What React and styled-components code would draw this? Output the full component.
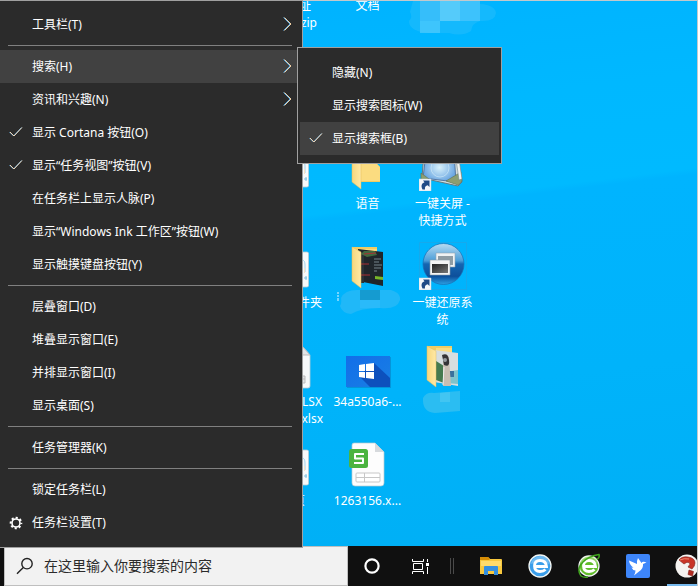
import React from "react";
import styled, { createGlobalStyle, css } from "styled-components";

const GlobalStyle = createGlobalStyle`
  * { box-sizing: border-box; }
  body { margin: 0; overflow: hidden; }
  button { border: 0; padding: 0; background: none; color: inherit; font: inherit; }
  svg { display: block; flex: none; }
`;

const uiFont = css`
  font-family: "Noto Sans", "Noto Sans CJK SC", sans-serif;
`;

const Screen = styled.div`
  ${uiFont}
  position: relative;
  display: flex;
  flex-direction: column;
  height: 100vh;
  border-right: 1px solid #c3c9cc;
  color: #fff;
  font-size: 12px;
`;

/* ---------- desktop ---------- */

const Desktop = styled.main`
  flex: 1;
  min-height: 0;
  overflow: hidden;
  border-top: 1px solid #c3c9cc;
  background: linear-gradient(173deg, #00b1ff 0%, #00b8ff 25%, #00baff 40%, #00b4fe 41%, #00b3fa 70%, #00aff5 100%);
`;

const IconGrid = styled.div`
  display: grid;
  grid-template-columns: repeat(3, 75px);
  grid-template-rows: repeat(6, 99px);
  grid-auto-flow: column;
  margin: -56px 0 0 255px;
`;

const Shortcut = styled.button`
  display: flex;
  flex-direction: column;
  align-items: center;
  gap: 4px;
`;

const Picture = styled.span`
  display: block;
  width: 48px;
  height: 48px;
`;

const Caption = styled.span`
  width: 75px;
  line-height: 17px;
  text-align: center;
  white-space: nowrap;
`;

const CaptionLine = styled.span`
  display: block;
  text-align: ${(p) => (p.$end === undefined ? "center" : "right")};
  padding-right: ${(p) => p.$end || 0}px;
`;

/* ---------- menus ---------- */

const menuPanel = css`
  background: #2b2b2b;
  border: 1px solid #a0a0a0;
`;

const ContextMenu = styled.div`
  ${menuPanel}
  position: absolute;
  top: 0;
  left: 0;
  width: 303px;
  padding: 7px 0 8px;
  border-left: 0;
  z-index: 2;
`;

const SubMenu = styled.div`
  ${menuPanel}
  position: absolute;
  left: 297px;
  top: -3px;
  width: 205px;
  padding: 8px 2px;
`;

const ItemSlot = styled.div`
  position: relative;
`;

const MenuItem = styled.button`
  display: flex;
  align-items: center;
  width: 100%;
  height: 33px;
  padding-right: 10px;
  text-align: left;
  background: ${(p) => (p.$active ? "#414141" : "transparent")};
`;

const Mark = styled.span`
  display: flex;
  justify-content: center;
  width: 32px;
`;

const ItemText = styled.span`
  flex: 1;
  line-height: 18px;
  white-space: nowrap;
`;

const Separator = styled.hr`
  height: 1px;
  margin: 4px 10px 4px 8px;
  border: 0;
  background: #808080;
`;

/* ---------- taskbar ---------- */

const Taskbar = styled.footer`
  display: flex;
  flex: none;
  height: 40px;
  padding-left: 4px;
  overflow: hidden;
  background: #101010;
`;

const SearchBox = styled.label`
  display: flex;
  align-items: center;
  gap: 10px;
  width: 344px;
  flex: none;
  padding-left: 11px;
  border: 1px solid #bfbfbf;
  background: #f2f2f2;
`;

const SearchInput = styled.input`
  ${uiFont}
  flex: 1;
  min-width: 0;
  border: 0;
  padding: 0;
  outline: 0;
  background: none;
  color: #1f1f1f;
  font-size: 14px;
  line-height: 20px;
  &::placeholder { color: #2b2b2b; opacity: 1; }
`;

const TaskButton = styled.button`
  display: flex;
  align-items: center;
  justify-content: center;
  flex: none;
  width: ${(p) => (p.$system ? 48 : 49)}px;
  height: 40px;
`;

const RunningButton = styled(TaskButton)`
  background: linear-gradient(#76b9ed, #76b9ed) 5px 100% / 44px 2px no-repeat;
`;

const Grip = styled.span`
  flex: none;
  align-self: center;
  width: 4px;
  height: 16px;
  margin: 0 12px 0 6px;
  border: 1px solid #4a4a4a;
  border-width: 0 1px;
`;

/* ---------- glyphs ---------- */

const Chevron = () => (
  <svg width="9" height="16" viewBox="0 0 9 16" fill="none">
    <path d="M.5.5 7 7 .5 13.5" stroke="#5aa9e0" />
    <path d="M1.5.5 8 7 1.5 13.5" stroke="#f0cfa4" />
  </svg>
);

const Check = () => (
  <svg width="14" height="14" viewBox="0 0 14 14" fill="none">
    <path d="M.5 6 4.5 10 12.5 1.5" stroke="#69a9d8" />
    <path d="M1 6 5 10 13 1.5" stroke="#ecd5b8" />
  </svg>
);

const Gear = () => (
  <svg width="14" height="14" viewBox="0 0 14 14" fill="none" stroke="#fff">
    <circle cx="7" cy="7" r="4" strokeWidth="1.6" />
    <circle cx="7" cy="7" r="5.3" strokeWidth="2" strokeDasharray="2.1 2.063" strokeDashoffset="1" />
  </svg>
);

const Magnifier = () => (
  <svg width="18" height="18" viewBox="0 0 18 18" fill="none" stroke="#222" strokeWidth="1.4">
    <circle cx="11" cy="6.7" r="5.2" />
    <path d="M7.3 10.4 1 16.8" />
  </svg>
);

/* ---------- desktop pictures ---------- */

const SheetEdge = ({ top, tall }) => (
  <svg width="48" height="48" viewBox="0 0 48 48">
    <path
      d={tall ? "M9 5h24l8 9v31q0 2-2 2H9z" : `M9 ${top}h29.500l1 1v33l-1 1H9z`}
      fill="#f7f9fa"
      stroke="#b8cbd4"
      strokeWidth=".8"
    />
    {tall ? (
      <path d="M33 5v9h8zM30 35h6v7h-6m0-4h6" fill="#e1e4e6" stroke="#bbb" />
    ) : (
      <>
        <path d="M33 18q3 0 3 5v7" fill="none" stroke="#9fd1ea" />
        <path d="M35.500 26v5" stroke="#f3e2c8" />
        <path d="M35 36h3m-1-2v4" stroke="#7fbfdf" />
      </>
    )}
  </svg>
);

const ShortcutArrow = () => (
  <g>
    <path d="M0 36h12v12H0z" fill="#f5f7fa" stroke="#c9d2da" strokeWidth=".5" />
    <path d="M3.500 46.500C1.500 42.500 3 40 5.500 39.200L4 37.500h6.500V44L8.700 42.300C6.800 42.500 5.500 44 6 46.500z" fill="#1f4a86" />
  </g>
);

const Folder = ({ children }) => (
  <svg width="48" height="48" viewBox="0 0 48 48">
    <defs>
      <linearGradient id="flap">
        <stop offset="0" stopColor="#f7d77c" />
        <stop offset="1" stopColor="#ffe9a6" />
      </linearGradient>
    </defs>
    <path d="M8 5h25v16l3 3v15H16z" fill="#f1cc63" />
    <path d="M17 7h16v14l3 3v14H17z" fill="#fbdc80" />
    {children}
    <path d="M8 5l9 5v36l-9-7z" fill="url(#flap)" stroke="#e2bd5e" strokeWidth=".5" />
  </svg>
);

const CodePage = () => (
  <g>
    <path d="M14 7l25 3v34l-25-5z" fill="#20262b" />
    <path d="M14 11h6v30h-3z" fill="#2b3237" />
    <path d="M20 9h11l2 4-10 2-6-3z" fill="#497b45" opacity=".8" />
    <path d="M20 12l12-1M17 22h8M17 33h9" stroke="#a92e35" />
    <path d="M30 17h7M30 20h5M30 23h8M30 26h7M30 29h3" stroke="#8b9da5" strokeWidth=".8" />
    <path d="M31 34l8 1v3l-8-1z" fill="#79b729" />
  </g>
);

const PhotoPage = () => (
  <g>
    <path d="M15 9l24 3v33l-24-4z" fill="#d8dedf" />
    <path d="M17 20l8 5v17l-8-3z" fill="#457a50" />
    <path d="M27 31l12-2v14l-12-1z" fill="#7fc3cc" />
    <path d="M30 30h5v6h-5z" fill="#3a719c" />
    <path d="M24 15q5-3 6 2l2 28h-8z" fill="#c9beb3" />
    <path d="M23 14q6-3 7 5t-5 5z" fill="#353437" />
    <circle cx="26" cy="19" r="2" fill="#969ba0" />
    <path d="M25 26l-1 18" stroke="#eee" />
  </g>
);

const Monitor = () => (
  <svg width="48" height="48" viewBox="0 0 48 48">
    <defs>
      <radialGradient id="glass">
        <stop offset="0" stopColor="#d8f1fb" />
        <stop offset="1" stopColor="#6ba7e2" />
      </radialGradient>
    </defs>
    <path d="M5 8h33l5 31-4 4L3 35z" fill="#d1dcdc" stroke="#617b83" />
    <path d="M7 10h28l2 29L4 35z" fill="url(#glass)" stroke="#5678a4" />
    <circle cx="21" cy="25" r="9" fill="none" stroke="#d5ecf8" opacity=".6" />
    <path d="M2 30l8 6-8 3z M27 38l15-9 1 9-4 4z" fill="#8c9e72" stroke="#5f7051" strokeWidth=".6" />
    <path d="M36 9h3l4 27-3 1z" fill="#f3f5f3" stroke="#72868c" strokeWidth=".6" />
    <ShortcutArrow />
  </svg>
);

const RestoreBall = () => (
  <svg width="48" height="48" viewBox="0 0 48 48">
    <defs>
      <linearGradient id="ball" x2="0" y2="1">
        <stop offset="0" stopColor="#b9dcf2" />
        <stop offset=".42" stopColor="#4a9dd8" />
        <stop offset=".5" stopColor="#1566b1" />
        <stop offset=".8" stopColor="#0d4f9b" />
        <stop offset="1" stopColor="#2ba0e4" />
      </linearGradient>
      <linearGradient id="pane" x2="1" y2="1">
        <stop offset="0" stopColor="#222" />
        <stop offset="1" stopColor="#777" />
      </linearGradient>
    </defs>
    <path d="M.5.500h47v47H.500z" fill="none" stroke="#16a9ec" />
    <circle cx="24.500" cy="22" r="20.500" fill="url(#ball)" stroke="#1a6fb3" strokeWidth=".7" />
    <path d="M17 11h19v14H17z" fill="#eff2f4" stroke="#94a5b1" strokeWidth=".6" />
    <path d="M19 14h15v9H19z" fill="#8f9ca4" />
    <path d="M11 18h20v15H11z" fill="#f5f5f5" stroke="#8b9ba6" strokeWidth=".6" />
    <path d="M13 22h16v9H13z" fill="url(#pane)" />
    <ShortcutArrow />
  </svg>
);

const WindowsPicture = () => (
  <svg width="48" height="48" viewBox="0 0 48 48">
    <defs>
      <linearGradient id="blue" x2="1" y2="1">
        <stop offset="0" stopColor="#126ee9" />
        <stop offset="1" stopColor="#197fe4" />
      </linearGradient>
    </defs>
    <path d="M3 16h44v31H3z" fill="#087bc0" opacity=".55" />
    <path d="M2 15h44v31H2z" fill="url(#blue)" />
    <path d="M30 22l16 15v9H26L15 35z" fill="#0d50bd" />
    <path d="M15 24l6-1v7h-6zM22 23l8-1v8h-8zM15 31h6v6l-6-1zM22 31h8v7l-8-1z" fill="#fff" />
  </svg>
);

const SpreadsheetFile = () => (
  <svg width="48" height="48" viewBox="0 0 48 48">
    <path d="M10 3h21l9 9v31q0 3-3 3H11q-3 0-3-3V5q0-2 2-2z" fill="#fdfdfd" stroke="#b6c8d0" strokeWidth=".7" />
    <path d="M31 3v9h9z" fill="#d7dadd" />
    <rect x="12" y="33" width="24" height="9" rx="1" fill="#fff" stroke="#c7c7c7" />
    <path d="M12 37.500h24M20.500 33v9" stroke="#c7c7c7" />
    <rect x="5" y="9" width="19" height="19" rx="2.500" fill="#4bb440" />
    <path d="M20 14h-9v4.500h8V23h-9" fill="none" stroke="#fff" strokeWidth="2" strokeLinejoin="round" />
  </svg>
);

const CloudSmear = () => (
  <svg width="112" height="36" viewBox="-22 0 112 36">
    <path d="M4 0h67v3q15 1 16 9-1 9-16 8-8 2-9 10-9 6-22 2H21Q0 31 0 20q4-4 1-9z" fill="#22bcfc" opacity=".6" />
    <path d="M11 0h20v20H11z" fill="#36befa" />
    <path d="M31 0h20v20H31z" fill="#55cbfa" />
    <path d="M51 0h20v20H51z" fill="#3dc2fc" />
    <path d="M11 20h20v12H11z" fill="#50cafb" opacity=".7" />
  </svg>
);

const TealSmear = () => (
  <svg width="64" height="26" viewBox="0 0 64 26">
    <path d="M2 3v2M1 7h2M2 9v3" stroke="#e8f6ff" />
    <path d="M5 9Q9 0 24 1h31q10 3 9 10-3 10-20 8-20 0-29 6Q6 24 4 17q2-3 1-8z" fill="#20b8f8" />
    <path d="M24 1h20v10H24z" fill="#159bd0" />
    <path d="M24 11h20v8H24z" fill="#2abafa" />
  </svg>
);

const SmallSmear = () => (
  <svg width="42" height="24" viewBox="0 0 42 24">
    <path d="M1 8Q4 2 12 3l26-2v20l-25 2Q0 22 1 8z" fill="#2bbdf2" />
    <path d="M18 3l10-1v10H18z" fill="#42c5f2" />
  </svg>
);

const SmearHolder = styled.span`
  display: flex;
  justify-content: center;
  margin-top: ${(p) => p.$lift}px;
`;

/* ---------- taskbar pictures ---------- */

const CortanaRing = () => (
  <svg width="18" height="18" viewBox="0 0 18 18" fill="none">
    <circle cx="9" cy="9" r="6.600" stroke="#fff" strokeWidth="2.200" />
  </svg>
);

const TaskViewGlyph = () => (
  <svg width="17" height="17" viewBox="0 0 17 17" fill="none" stroke="#fff">
    <path d="M.5 1v2.500h11V1M1.500 5.500h9v6h-9zM.5 16v-2.500h11V16M15.500 1v3M15.500 9v7" />
    <path d="M14 5h3v3h-3z" fill="#fff" stroke="none" />
  </svg>
);

const ExplorerIcon = () => (
  <svg width="22" height="20" viewBox="0 0 22 20">
    <path d="M0 2q0-1 1-1h7l2 2h11q1 0 1 1v14H0z" fill="#f8c83e" />
    <path d="M0 4V2q0-1 1-1h7l2 2-1 1z" fill="#d68d05" />
    <path d="M1 5h20v5H1z" fill="#ffdb6a" />
    <path d="M4 19v-8q0-1 1-1h12q1 0 1 1v8h-4v-4H8v4z" fill="#348fdf" />
  </svg>
);

const BrowserBall = ({ color, light, leaf }) => (
  <svg width="24" height="26" viewBox="0 0 24 26">
    <circle cx="12" cy="13" r={leaf ? 10 : 11} fill={color} stroke="#f2f6f4" strokeWidth="1.300" />
    <path d="M3 11Q4 4 12 3t9 8Q12 6 3 11z" fill={light} opacity=".5" />
    <path
      d="M6.500 13.500h12Q18 7.500 12 7.500q-5.500 0-5.500 5.500t5.500 5.500q3.500 0 5.500-2"
      fill="none"
      stroke="#fff"
      strokeWidth="2.800"
    />
    {leaf && (
      <path
        d="M4 23Q-1 16 6 9 12 3 22 1.500q1 3-2 5M4 23q3 2 7 1"
        fill="none"
        stroke="#3fa51c"
        strokeWidth="1.500"
      />
    )}
  </svg>
);

const BirdIcon = () => (
  <svg width="24" height="24" viewBox="0 0 24 24">
    <rect width="24" height="24" rx="2" fill="#3e86fa" />
    <path
      d="M3 6.500l8 3.500Q10.500 7 12 4l3.500 5q1-1.800 2.500-1.200l2.500.7-3.500 1.500q.5 5-4 7.500l-5 4q1.500-3 1.500-5-3-.3-4-3l2 .2Q3.500 11 3 6.500z"
      fill="#fff"
    />
  </svg>
);

const HelpIcon = () => (
  <svg width="24" height="24" viewBox="0 0 24 24">
    <circle cx="12" cy="12" r="11.500" fill="#f5f3f1" />
    <path d="M4 6q3-4 9-3 7 1 7 6 0 3-3 6l-4-2q3-3 1-4.500-2-1-5 1.500z" fill="#c93528" stroke="#7d2019" strokeWidth=".6" />
    <path d="M5 6q4-2 9-1" fill="none" stroke="#f08b72" />
    <path d="M14 16l4.500 1.500-1 4.500-4.500-1.500z" fill="#b32c22" stroke="#7d2019" strokeWidth=".6" />
  </svg>
);

/* ---------- data ---------- */

const shortcuts = [
  { name: "zip", lines: [["址", 19], ["zip", 13]] },
  { name: "blank-1" },
  { name: "page", art: <SheetEdge top={9} /> },
  { name: "folder", art: <SheetEdge top={10} />, lines: [["件夹", 8]] },
  { name: "xlsx", art: <SheetEdge tall />, lines: [["LSX", 8], ["xlsx", 7]] },
  { name: "tail", art: <SheetEdge top={10} />, lines: [["页", 25]] },
  { name: "documents", art: <Folder />, lines: [["文档"]] },
  { name: "blank-2" },
  { name: "voice", art: <Folder />, lines: [["语音"]] },
  { name: "code", art: <Folder><CodePage /></Folder>, smear: <TealSmear />, lift: -5 },
  { name: "picture", art: <WindowsPicture />, lines: [["34a550a6-..."]] },
  { name: "sheet", art: <SpreadsheetFile />, lines: [["1263156.x..."]] },
  { name: "cloud", smear: <CloudSmear />, lift: 4 },
  { name: "blank-3" },
  { name: "screen-off", art: <Monitor />, lines: [["一键关屏 -"], ["快捷方式"]] },
  { name: "restore", art: <RestoreBall />, lines: [["一键还原系"], ["统"]] },
  { name: "photos", art: <Folder><PhotoPage /></Folder>, smear: <SmallSmear />, lift: -3 },
];

const menu = [
  { text: "工具栏(T)", more: true },
  null,
  {
    text: "搜索(H)",
    more: true,
    active: true,
    children: [
      { text: "隐藏(N)" },
      { text: "显示搜索图标(W)" },
      { text: "显示搜索框(B)", checked: true, active: true },
    ],
  },
  { text: "资讯和兴趣(N)", more: true },
  { text: "显示 Cortana 按钮(O)", checked: true },
  { text: "显示“任务视图”按钮(V)", checked: true },
  { text: "在任务栏上显示人脉(P)" },
  { text: "显示“Windows Ink 工作区”按钮(W)" },
  { text: "显示触摸键盘按钮(Y)" },
  null,
  { text: "层叠窗口(D)" },
  { text: "堆叠显示窗口(E)" },
  { text: "并排显示窗口(I)" },
  { text: "显示桌面(S)" },
  null,
  { text: "任务管理器(K)" },
  null,
  { text: "锁定任务栏(L)" },
  { text: "任务栏设置(T)", gear: true },
];

function Entry({ item }) {
  return (
    <ItemSlot>
      <MenuItem
        role={item.checked ? "menuitemcheckbox" : "menuitem"}
        aria-checked={item.checked}
        aria-haspopup={item.more ? "menu" : undefined}
        $active={item.active}
      >
        <Mark>
          {item.checked && <Check />}
          {item.gear && <Gear />}
        </Mark>
        <ItemText>{item.text}</ItemText>
        {item.more && <Chevron />}
      </MenuItem>
      {item.children && (
        <SubMenu role="menu">
          {item.children.map((child) => (
            <Entry key={child.text} item={child} />
          ))}
        </SubMenu>
      )}
    </ItemSlot>
  );
}

export default function App() {
  return (
    <Screen lang="zh-CN">
      <GlobalStyle />
      <Desktop>
        <IconGrid>
          {shortcuts.map((s) =>
            s.art || s.lines || s.smear ? (
              <Shortcut key={s.name} aria-label={s.lines ? undefined : s.name}>
                <Picture>{s.art}</Picture>
                {s.lines && (
                  <Caption>
                    {s.lines.map(([text, end]) => (
                      <CaptionLine key={text} $end={end}>{text}</CaptionLine>
                    ))}
                  </Caption>
                )}
                {s.smear && <SmearHolder $lift={s.lift}>{s.smear}</SmearHolder>}
              </Shortcut>
            ) : (
              <span key={s.name} />
            )
          )}
        </IconGrid>
      </Desktop>

      <Taskbar>
        <SearchBox>
          <Magnifier />
          <SearchInput aria-label="搜索" placeholder="在这里输入你要搜索的内容" />
        </SearchBox>
        <TaskButton $system aria-label="Cortana"><CortanaRing /></TaskButton>
        <TaskButton $system aria-label="任务视图"><TaskViewGlyph /></TaskButton>
        <Grip />
        <TaskButton aria-label="文件资源管理器"><ExplorerIcon /></TaskButton>
        <TaskButton aria-label="浏览器"><BrowserBall color="#3a9eea" light="#a5d8fa" /></TaskButton>
        <TaskButton aria-label="安全浏览器"><BrowserBall color="#62bd2c" light="#c3e8a2" leaf /></TaskButton>
        <TaskButton aria-label="飞鸟"><BirdIcon /></TaskButton>
        <RunningButton aria-label="帮助"><HelpIcon /></RunningButton>
      </Taskbar>

      <ContextMenu role="menu">
        {menu.map((item, i) =>
          item ? <Entry key={item.text} item={item} /> : <Separator key={i} />
        )}
      </ContextMenu>
    </Screen>
  );
}
